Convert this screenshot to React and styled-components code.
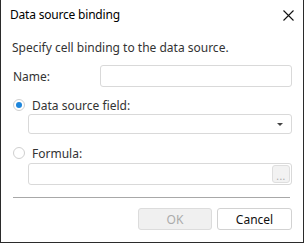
import React from 'react';
import styled, { createGlobalStyle } from 'styled-components';

const Global = createGlobalStyle`
  html, body { margin: 0; padding: 0; background: #fff; }
  body { font-family: "Noto Sans", "Open Sans", sans-serif; font-size: 12px; color: #222; }
  * { box-sizing: border-box; }
`;

const Dialog = styled.div`
  width: 304px;
  height: 243px;
  background: #fff;
  border: 1px solid #2b2b2b;
  border-top: none;
  display: flex;
  flex-direction: column;
`;

const Header = styled.div`
  height: 30px;
  display: flex;
  align-items: center;
  justify-content: space-between;
  padding: 0 9px 0 9px;
`;

const Title = styled.div`
  font-size: 12px;
  color: #000;
  line-height: 16px;
  letter-spacing: -0.2px;
`;

const Close = styled.svg`
  width: 11px;
  height: 11px;
`;

const Body = styled.div`
  display: flex;
  flex-direction: column;
  padding: 0 11px 0 11px;
`;

const Hint = styled.div`
  margin-top: 10px;
  line-height: 16px;
  color: #333;
`;

const FieldRow = styled.div`
  margin-top: ${p => p.$mt ?? 9}px;
  display: flex;
  align-items: center;
`;

const Label = styled.div`
  width: 88px;
  padding-left: 1px;
  color: #333;
`;

const Input = styled.div`
  flex: 1;
  height: ${p => p.$h || 22}px;
  margin-left: ${p => p.$indent || 0}px;
  border: 1px solid #d9d9d9;
  border-radius: 3px;
  background: #fff;
  display: flex;
  align-items: center;
  justify-content: flex-end;
  padding-right: ${p => p.$pr || 0}px;
`;

const RadioRow = styled.label`
  margin-top: ${p => p.$mt}px;
  height: 16px;
  display: flex;
  align-items: center;
  gap: 7px;
  padding-left: 1px;
  color: #333;
`;

const Radio = styled.span`
  width: 12px;
  height: 12px;
  border-radius: 50%;
  border: 1px solid #cfcfcf;
  background: #fff;
  display: flex;
  align-items: center;
  justify-content: center;
  &::after {
    content: '';
    width: 6px;
    height: 6px;
    border-radius: 50%;
    background: ${p => (p.$checked ? '#1e86dc' : 'transparent')};
  }
`;

const Caret = styled.span`
  width: 0;
  height: 0;
  border-left: 3px solid transparent;
  border-right: 3px solid transparent;
  border-top: 3px solid #444;
  margin-top: 1px;
`;

const Dots = styled.span`
  width: 18px;
  height: 18px;
  border: 1px solid #dedede;
  border-radius: 3px;
  background: #f2f2f2;
  color: #aaa;
  font-size: 10px;
  display: flex;
  align-items: center;
  justify-content: center;
  padding-top: 4px;
  letter-spacing: 0.5px;
`;

const Separator = styled.div`
  margin-top: 12px;
  margin-right: 2px;
  margin-left: 1px;
  height: 1px;
  background: #a8a8a8;
`;

const Buttons = styled.div`
  margin-top: 10px;
  display: flex;
  justify-content: flex-end;
  gap: 5px;
`;

const Button = styled.button`
  width: ${p => p.$w}px;
  height: 22px;
  border-radius: 3px;
  font-family: inherit;
  font-size: 12px;
  border: 1px solid ${p => (p.disabled ? '#dcdcdc' : '#d2d2d2')};
  background: ${p => (p.disabled ? '#f0f0f0' : '#fff')};
  color: ${p => (p.disabled ? '#ababab' : '#111')};
  padding: 0;
`;

export default function App() {
  return (
    <>
      <Global />
      <Dialog>
        <Header>
          <Title>Data source binding</Title>
          <Close viewBox="0 0 11 11">
            <path d="M0.5 0.5 L10.5 10.5 M10.5 0.5 L0.5 10.5" stroke="#111" strokeWidth="1.1" fill="none" />
          </Close>
        </Header>
        <Body>
          <Hint>Specify cell binding to the data source.</Hint>
          <FieldRow>
            <Label>Name:</Label>
            <Input />
          </FieldRow>
          <RadioRow $mt={10}>
            <Radio $checked />
            Data source field:
          </RadioRow>
          <FieldRow $mt={1}>
            <Input $indent={16} $h={20} $pr={8}>
              <Caret />
            </Input>
          </FieldRow>
          <RadioRow $mt={11}>
            <Radio />
            Formula:
          </RadioRow>
          <FieldRow $mt={2}>
            <Input $indent={16} $pr={1}>
              <Dots>...</Dots>
            </Input>
          </FieldRow>
          <Separator />
          <Buttons>
            <Button $w={74} disabled>OK</Button>
            <Button $w={75}>Cancel</Button>
          </Buttons>
        </Body>
      </Dialog>
    </>
  );
}
